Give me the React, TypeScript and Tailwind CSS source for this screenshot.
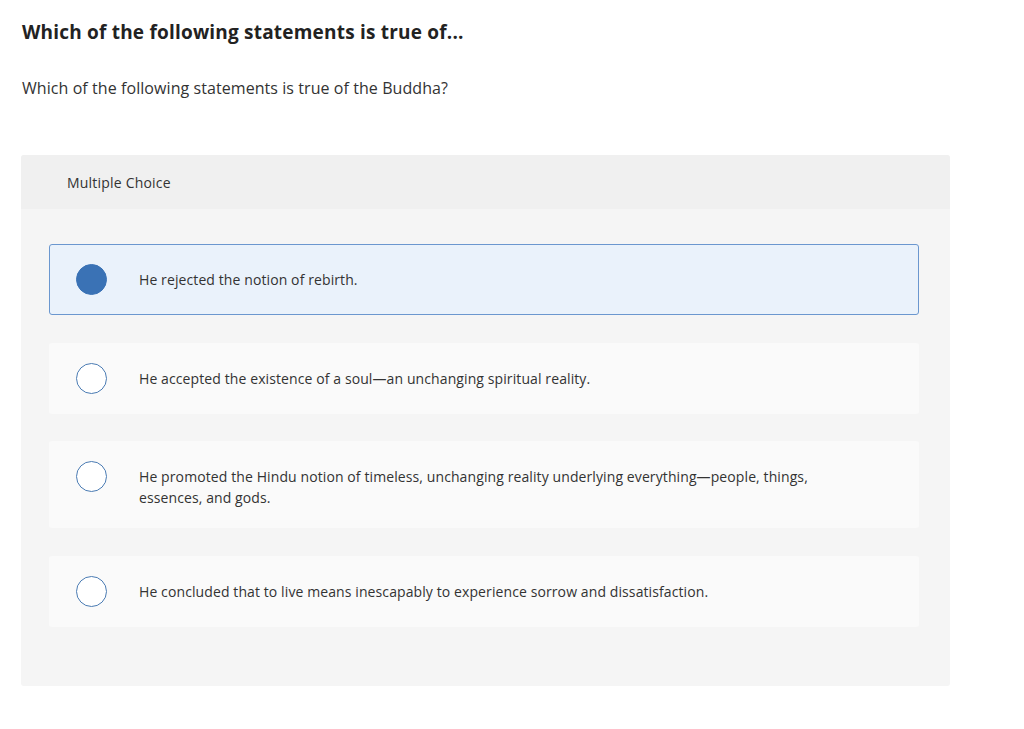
import React from 'react';

const options = [
  'He rejected the notion of rebirth.',
  'He accepted the existence of a soul\u2014an unchanging spiritual reality.',
  'He promoted the Hindu notion of timeless, unchanging reality underlying everything\u2014people, things, essences, and gods.',
  'He concluded that to live means inescapably to experience sorrow and dissatisfaction.',
];

const App: React.FC = () => {
  const selected = 0;

  return (
    <div className="min-h-screen bg-white text-[#333]" style={{ fontFamily: '"Open Sans", Lato, Arial, sans-serif' }}>
      <div className="w-[950px] pl-[21px] pt-[20px]">
        <h1 className="pl-[1px] text-[19px] font-bold leading-[24px] tracking-[0.2px] text-[#222]">
          Which of the following statements is true of...
        </h1>
        <p className="mt-[34px] pl-[1px] text-[16px] leading-[20px] tracking-[0.07px]">
          Which of the following statements is true of the Buddha?
        </p>

        <div className="mt-[57px] rounded-[3px] bg-[#f5f5f5]">
          <div className="flex h-[54px] items-center rounded-t-[3px] bg-[#f0f0f0] pl-[46px] text-[14px] tracking-[0.2px]">
            Multiple Choice
          </div>

          <div className="flex flex-col gap-[27.5px] pb-[59px] pl-[28px] pr-[31px] pt-[35px]">
            {options.map((text, i) => {
              const isActive = i === selected;
              return (
                <div
                  key={i}
                  className={`flex items-start rounded-[3px] border py-[19px] pl-[26px] pr-[80px] ${
                    isActive ? 'border-[#6b97cf] bg-[#eaf2fb]' : 'border-transparent bg-[#fafafa]'
                  }`}
                >
                  <span
                    className={`h-[31px] w-[31px] shrink-0 rounded-full border ${
                      isActive ? 'border-[#3a72b5] bg-[#3a72b5]' : 'border-[#4a7bb3] bg-white'
                    }`}
                  ></span>
                  <span className="ml-[32px] pt-[5px] text-[14px] leading-[21px] tracking-[0.1px]">{text}</span>
                </div>
              );
            })}
          </div>
        </div>
      </div>
    </div>
  );
};

export default App;
